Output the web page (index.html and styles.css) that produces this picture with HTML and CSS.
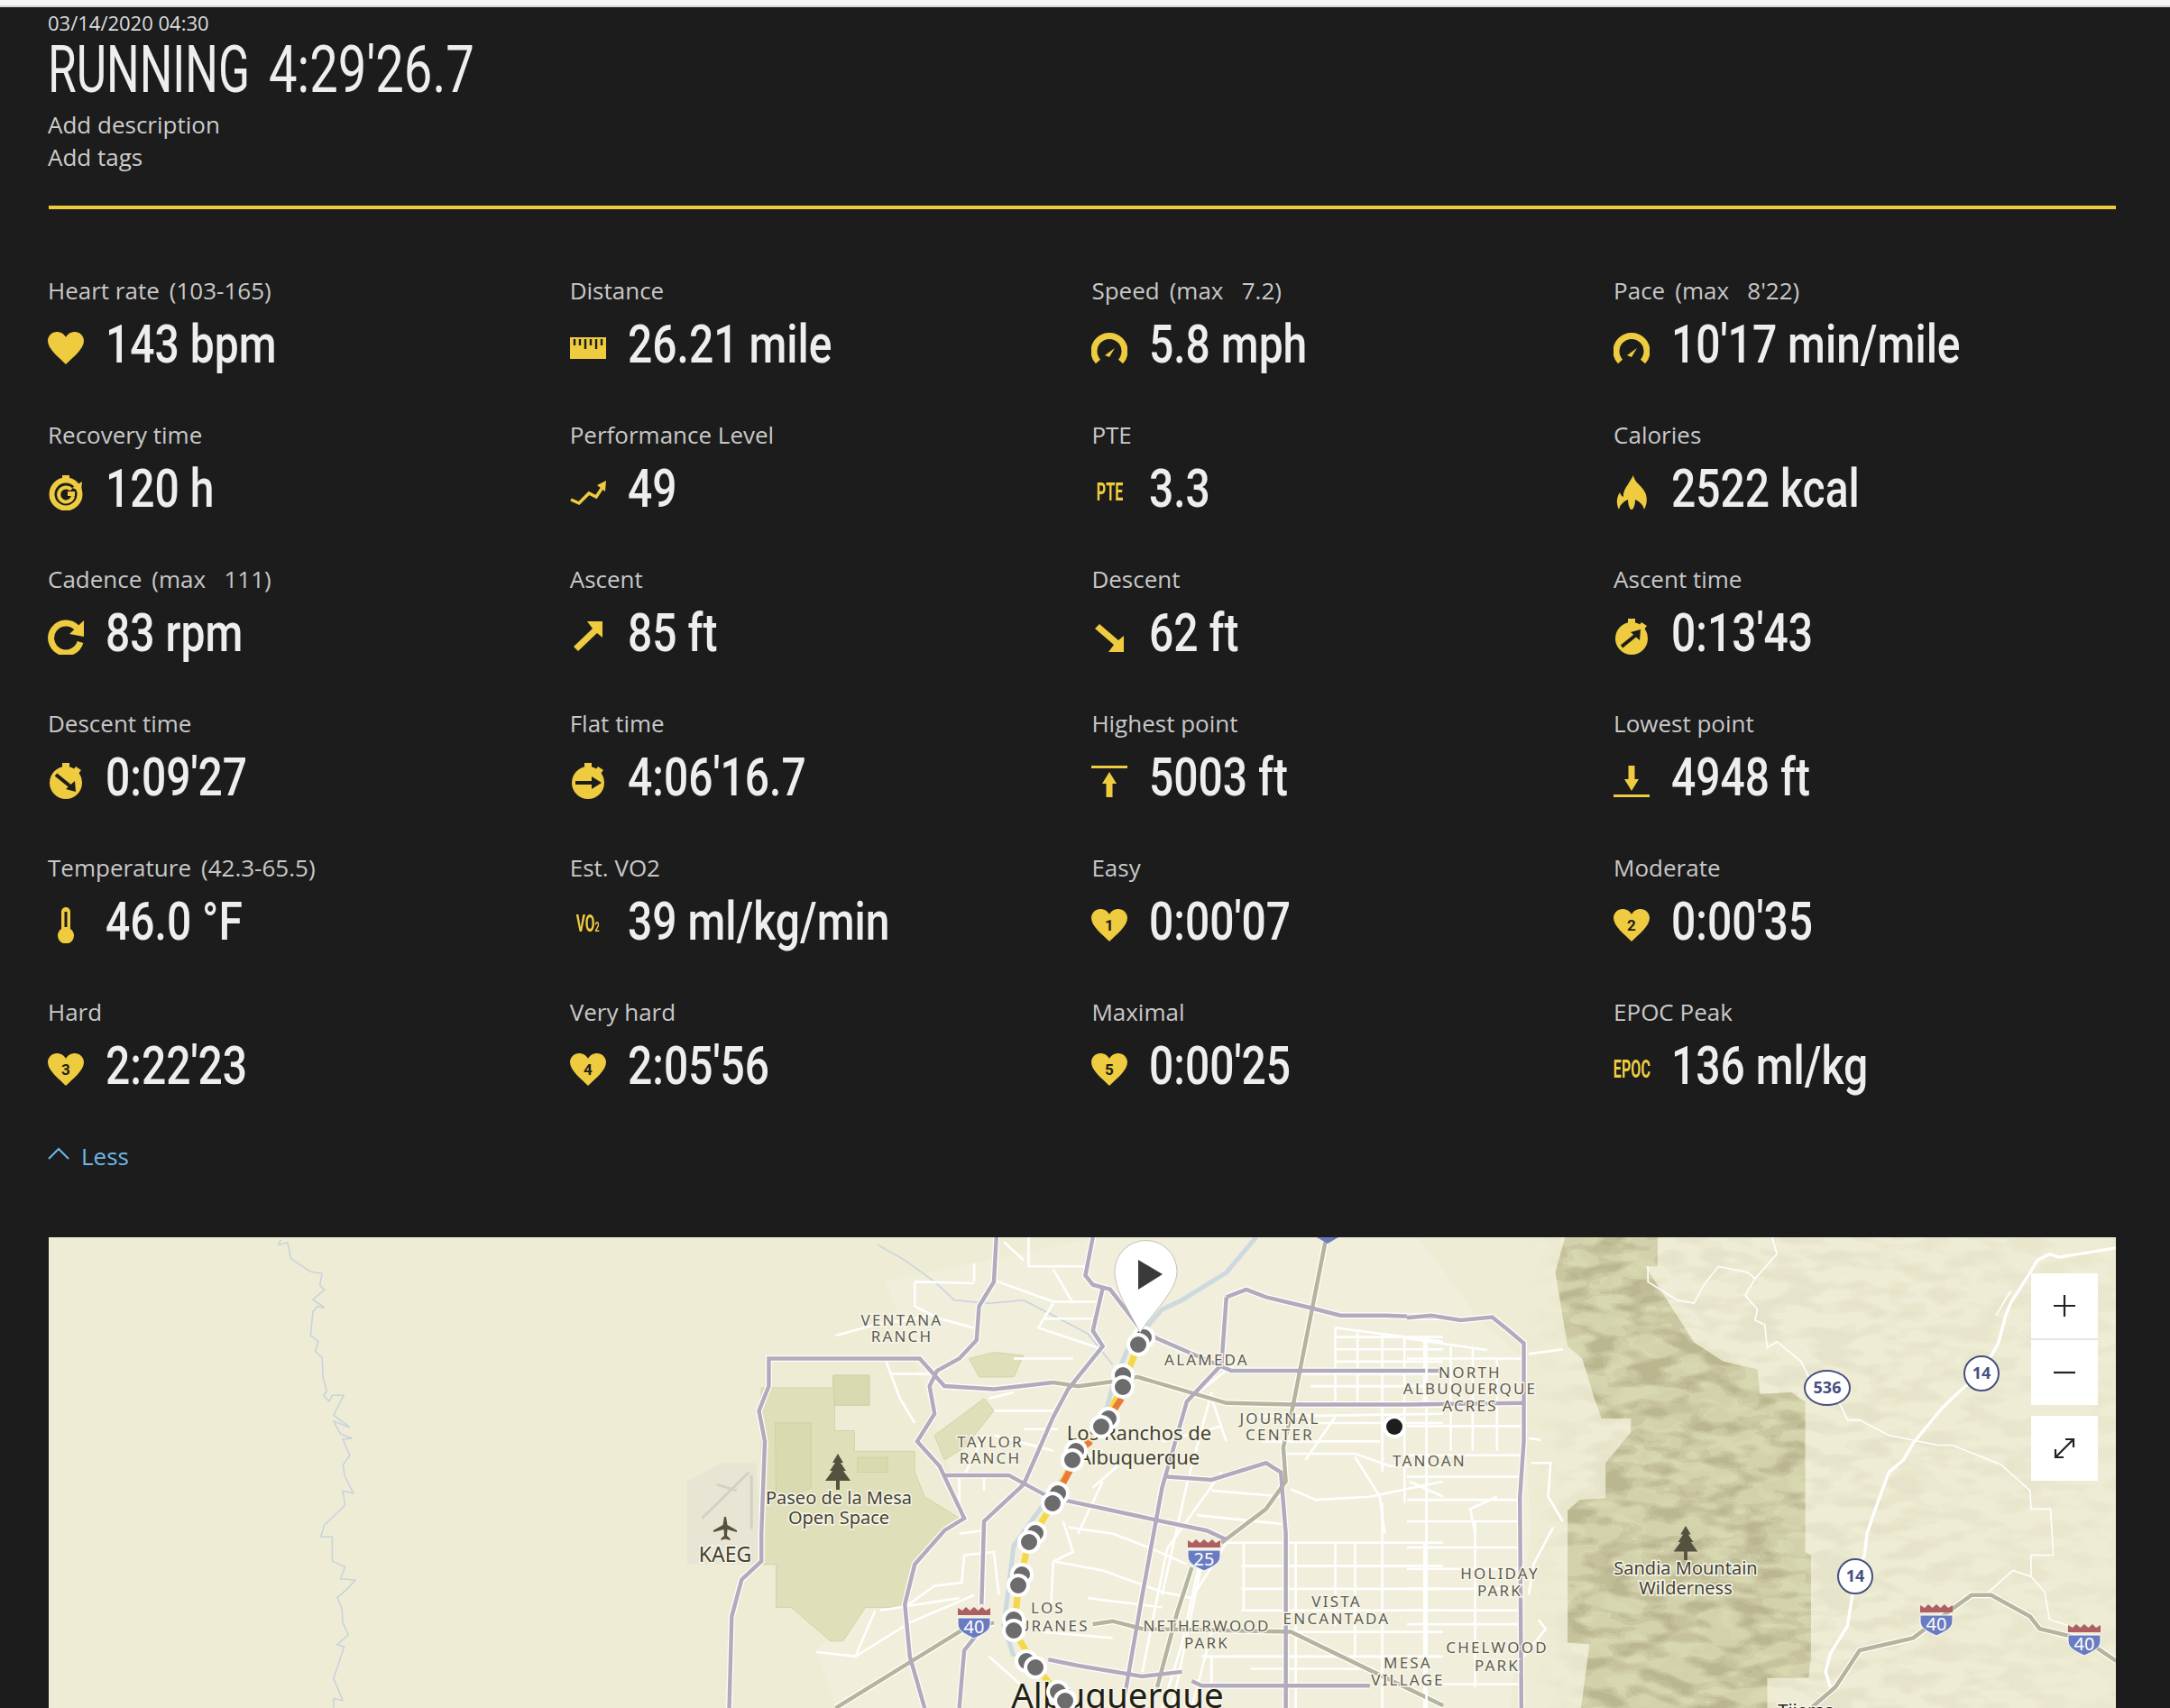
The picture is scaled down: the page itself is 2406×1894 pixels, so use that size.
FILE: index.html
```html
<!DOCTYPE html>
<html lang="en">
<head>
  <meta charset="UTF-8">
  <title>Running 4:29'26.7</title>
  <link rel="stylesheet" href="styles.css">
</head>
<body>
  <svg class="sprites" width="0" height="0">
    <symbol id="i-heart" viewBox="0 0 40 40"><path d="M20 38C12 30 0 21 0 12 0 6 5 2 10 2c4 0 8 2 10 6 2-4 6-6 10-6 5 0 10 4 10 10 0 9-12 18-20 26z"/></symbol>
    <symbol id="i-ruler" viewBox="0 0 40 40"><path d="M0 8h40v24H0z"/><path d="M5 10v7M11 10v7M17 10v11M23 10v7M29 10v11M35 10v7" stroke="#1c1c1c" stroke-width="2.4"/></symbol>
    <symbol id="i-gauge" viewBox="0 0 40 40"><path d="M7.500 35A17 17 0 1 1 32.500 35" fill="none" stroke="#eecb3f" stroke-width="7"/><path d="M15 28l11-8-6 10z"/></symbol>
    <symbol id="i-recovery" viewBox="0 0 40 40"><path d="M16 1h8v4h-8z"/><circle cx="20" cy="22" r="15.500" fill="none" stroke="#eecb3f" stroke-width="6"/><path d="M26 17a8 8 0 1 0 2 7" fill="none" stroke="#eecb3f" stroke-width="4"/><path d="M38 8l-1 11-10-4zM22 19h8v5h-8z"/></symbol>
    <symbol id="i-cadence" viewBox="0 0 40 40"><path d="M32 10A16.500 16.500 0 1 0 36 26" fill="none" stroke="#eecb3f" stroke-width="7"/><path d="M40 2v18l-16-3z"/></symbol>
    <symbol id="i-perf" viewBox="0 0 40 40"><path d="M1 28l9 4 11-11 8 4 8-12" fill="none" stroke="#eecb3f" stroke-width="3.500"/><path d="M40 7l-1 12-9-7z"/></symbol>
    <symbol id="i-flame" viewBox="0 0 40 40"><path d="M22 1C23 9 31 12 35 20 38 27 37 33 34 39 32 32 28 30 24 28 24 33 23 36 21 39H19C17 36 16 33 16 28 12 30 8 32 6 39 3 33 3 26 7 20 8 23 9 24 11 25 10 17 17 11 22 1Z"/></symbol>
    <symbol id="i-up" viewBox="0 0 40 40"><path d="M36 3v18l-6-5-21 20-5-5 21-20-6-8z"/></symbol>
    <symbol id="i-down" viewBox="0 0 40 40"><path d="M36 37V19l-6 5L9 6 4 11l21 18-6 8z"/></symbol>
    <symbol id="i-watch-up" viewBox="0 0 40 40"><path d="M16 0h8v5h-8zM31 4l6 4-3 4-6-4z"/><circle cx="20" cy="22" r="18"/><path d="M9 31l16-13" stroke="#1c1c1c" stroke-width="4"/><path d="M30 12l-1 12-10-9z" fill="#1c1c1c"/></symbol>
    <symbol id="i-watch-down" viewBox="0 0 40 40"><path d="M16 0h8v5h-8zM31 4l6 4-3 4-6-4z"/><circle cx="20" cy="22" r="18"/><path d="M9 13l16 13" stroke="#1c1c1c" stroke-width="4"/><path d="M31 32l-1-12-10 9z" fill="#1c1c1c"/></symbol>
    <symbol id="i-watch-flat" viewBox="0 0 40 40"><path d="M16 0h8v5h-8zM31 4l6 4-3 4-6-4z"/><circle cx="20" cy="22" r="18"/><path d="M6 22h20" stroke="#1c1c1c" stroke-width="4"/><path d="M35 22l-11-7v14z" fill="#1c1c1c"/></symbol>
    <symbol id="i-temp" viewBox="0 0 40 40"><path d="M15 24V5a5 5 0 0 1 10 0v19a9 9 0 1 1-10 0z"/><path d="M20 5v17" stroke="#1c1c1c" stroke-width="3"/></symbol>
    <symbol id="i-high" viewBox="0 0 40 40"><path d="M0 3h40v3H0zM20 10l8 13h-4.500v15h-7V23H12z"/></symbol>
    <symbol id="i-low" viewBox="0 0 40 40"><path d="M0 35h40v3H0zM20 31l8-13h-4.500V3h-7v15H12z"/></symbol>
    <symbol id="p-tree" viewBox="0 0 30 40"><path d="M15 0l6 10h-3l6 9h-3l8 11H17v10h-4V30H1l8-11H6l6-9H9z"/></symbol>
    <symbol id="p-plane" viewBox="0 0 26 26"><path d="M12 0h2l1.500 9L26 15v2l-10.500-3-.5 7 3.500 3v2L13 24.500 8.500 26v-2l3.500-3-.5-7L0 17v-2l10.500-6z"/></symbol>
    <g id="shield">
      <path d="M-18-5H18V2C18 10 8 14 0 18-8 14-18 10-18 2Z" fill="#6a7cc0" stroke="#fff"/>
      <path d="M-18-8V-16L-13-13-9-17-4.500-13 0-17 4.500-13 9-17 13-13 18-16V-8Z" fill="#ad5f63"/>
    </g>
  </svg>

  <div class="topbar"></div>

  <header class="head">
    <div class="head-date">03/14/2020 04:30</div>
    <h1 class="head-title"><span class="title-sport">RUNNING</span><span class="title-time">4:29'26.7</span></h1>
    <div class="head-link">Add description</div>
    <div class="head-link">Add tags</div>
  </header>

  <main class="content">
    <div class="stats">
      <div class="stat">
        <div class="stat-label">Heart rate<span class="range">(103-165)</span></div>
        <div class="stat-value"><svg class="stat-icon"><use href="#i-heart"/></svg><span class="num">143 bpm</span></div>
      </div>
      <div class="stat">
        <div class="stat-label">Distance</div>
        <div class="stat-value"><svg class="stat-icon"><use href="#i-ruler"/></svg><span class="num">26.21 mile</span></div>
      </div>
      <div class="stat">
        <div class="stat-label">Speed<span class="range">(max&nbsp;&nbsp; 7.2)</span></div>
        <div class="stat-value"><svg class="stat-icon"><use href="#i-gauge"/></svg><span class="num">5.8 mph</span></div>
      </div>
      <div class="stat">
        <div class="stat-label">Pace<span class="range">(max&nbsp;&nbsp; 8'22)</span></div>
        <div class="stat-value"><svg class="stat-icon"><use href="#i-gauge"/></svg><span class="num">10'17 min/mile</span></div>
      </div>

      <div class="stat">
        <div class="stat-label">Recovery time</div>
        <div class="stat-value"><svg class="stat-icon"><use href="#i-recovery"/></svg><span class="num">120 h</span></div>
      </div>
      <div class="stat">
        <div class="stat-label">Performance Level</div>
        <div class="stat-value"><svg class="stat-icon"><use href="#i-perf"/></svg><span class="num">49</span></div>
      </div>
      <div class="stat">
        <div class="stat-label">PTE</div>
        <div class="stat-value"><span class="stat-icon icon-text"><span>PTE</span></span><span class="num">3.3</span></div>
      </div>
      <div class="stat">
        <div class="stat-label">Calories</div>
        <div class="stat-value"><svg class="stat-icon"><use href="#i-flame"/></svg><span class="num">2522 kcal</span></div>
      </div>

      <div class="stat">
        <div class="stat-label">Cadence<span class="range">(max&nbsp;&nbsp; 111)</span></div>
        <div class="stat-value"><svg class="stat-icon"><use href="#i-cadence"/></svg><span class="num">83 rpm</span></div>
      </div>
      <div class="stat">
        <div class="stat-label">Ascent</div>
        <div class="stat-value"><svg class="stat-icon"><use href="#i-up"/></svg><span class="num">85 ft</span></div>
      </div>
      <div class="stat">
        <div class="stat-label">Descent</div>
        <div class="stat-value"><svg class="stat-icon"><use href="#i-down"/></svg><span class="num">62 ft</span></div>
      </div>
      <div class="stat">
        <div class="stat-label">Ascent time</div>
        <div class="stat-value"><svg class="stat-icon"><use href="#i-watch-up"/></svg><span class="num">0:13'43</span></div>
      </div>

      <div class="stat">
        <div class="stat-label">Descent time</div>
        <div class="stat-value"><svg class="stat-icon"><use href="#i-watch-down"/></svg><span class="num">0:09'27</span></div>
      </div>
      <div class="stat">
        <div class="stat-label">Flat time</div>
        <div class="stat-value"><svg class="stat-icon"><use href="#i-watch-flat"/></svg><span class="num">4:06'16.7</span></div>
      </div>
      <div class="stat">
        <div class="stat-label">Highest point</div>
        <div class="stat-value"><svg class="stat-icon"><use href="#i-high"/></svg><span class="num">5003 ft</span></div>
      </div>
      <div class="stat">
        <div class="stat-label">Lowest point</div>
        <div class="stat-value"><svg class="stat-icon"><use href="#i-low"/></svg><span class="num">4948 ft</span></div>
      </div>

      <div class="stat">
        <div class="stat-label">Temperature<span class="range">(42.3-65.5)</span></div>
        <div class="stat-value"><svg class="stat-icon"><use href="#i-temp"/></svg><span class="num">46.0 °F</span></div>
      </div>
      <div class="stat">
        <div class="stat-label">Est. VO2</div>
        <div class="stat-value"><span class="stat-icon icon-text icon-vo"><span>VO<small>2</small></span></span><span class="num">39 ml/kg/min</span></div>
      </div>
      <div class="stat">
        <div class="stat-label">Easy</div>
        <div class="stat-value"><svg class="stat-icon" viewBox="0 0 40 40"><use href="#i-heart" width="40" height="40"/><text class="zone-num" x="20" y="26">1</text></svg><span class="num">0:00'07</span></div>
      </div>
      <div class="stat">
        <div class="stat-label">Moderate</div>
        <div class="stat-value"><svg class="stat-icon" viewBox="0 0 40 40"><use href="#i-heart" width="40" height="40"/><text class="zone-num" x="20" y="26">2</text></svg><span class="num">0:00'35</span></div>
      </div>

      <div class="stat">
        <div class="stat-label">Hard</div>
        <div class="stat-value"><svg class="stat-icon" viewBox="0 0 40 40"><use href="#i-heart" width="40" height="40"/><text class="zone-num" x="20" y="26">3</text></svg><span class="num">2:22'23</span></div>
      </div>
      <div class="stat">
        <div class="stat-label">Very hard</div>
        <div class="stat-value"><svg class="stat-icon" viewBox="0 0 40 40"><use href="#i-heart" width="40" height="40"/><text class="zone-num" x="20" y="26">4</text></svg><span class="num">2:05'56</span></div>
      </div>
      <div class="stat">
        <div class="stat-label">Maximal</div>
        <div class="stat-value"><svg class="stat-icon" viewBox="0 0 40 40"><use href="#i-heart" width="40" height="40"/><text class="zone-num" x="20" y="26">5</text></svg><span class="num">0:00'25</span></div>
      </div>
      <div class="stat">
        <div class="stat-label">EPOC Peak</div>
        <div class="stat-value"><span class="stat-icon icon-text"><span>EPOC</span></span><span class="num">136 ml/kg</span></div>
      </div>
    </div>

    <a class="less" href="#">
      <svg class="less-chevron" viewBox="0 0 24 14"><path d="M1 13L12 2l11 11"/></svg>
      Less
    </a>

    <div class="map">
      <svg class="map-svg" viewBox="0 0 2292 522" width="2292" height="522">
        <defs>
          <filter id="hills" x="0" y="0" width="100%" height="100%" color-interpolation-filters="sRGB">
            <feTurbulence type="fractalNoise" baseFrequency=".024 .06" numOctaves="2" seed="7"/>
            <feColorMatrix values="0 0 0 0 .60  0 0 0 0 .57  0 0 0 0 .42  3.4 0 0 0 -1.35"/>
            <feComponentTransfer><feFuncA type="discrete" tableValues="0 .35 .7 1"/></feComponentTransfer>
          </filter>
          <filter id="hills-light" x="0" y="0" width="100%" height="100%" color-interpolation-filters="sRGB">
            <feTurbulence type="fractalNoise" baseFrequency=".03 .05" numOctaves="2" seed="21"/>
            <feColorMatrix values="0 0 0 0 .92  0 0 0 0 .91  0 0 0 0 .76  3.4 0 0 0 -1.35"/>
            <feComponentTransfer><feFuncA type="discrete" tableValues="0 .4 .8"/></feComponentTransfer>
          </filter>
          <linearGradient id="hills-fade">
            <stop offset="0" stop-color="#000"/>
            <stop offset=".12" stop-color="#fff"/>
            <stop offset=".55" stop-color="#fff"/>
            <stop offset="1" stop-color="#777"/>
          </linearGradient>
          <mask id="hills-mask" maskUnits="userSpaceOnUse" x="1640" y="0" width="652" height="522">
            <rect x="1640" width="652" height="522" fill="url(#hills-fade)"/>
          </mask>
          <clipPath id="wild-clip">
            <polygon transform="translate(1506 -12) scale(.5397 .3406)" points="325,35 515,35 515,130 490,130 590,378 650,440 720,465 725,545 790,540 818,570 818,1060 830,1070 830,1400 825,1470 740,1470 740,1600 355,1600 375,1360 330,1355 330,925 355,890 408,885 408,770 460,670 460,625 400,625 385,560 360,430 330,390 305,150"/>
          </clipPath>
          <g id="a-arts">
            <path d="M125 1568L130 1270 150 1150 190 1090 190 1000 197 700 185 600 205 520V430H510L560 520 660 530 780 508"/>
            <path d="M860 35L845 160 860 190 895 205 950 320 990 365 1140 470H1280L1568 470"/>
            <path d="M1265 580H1568"/>
            <path d="M665 35L660 180 630 260 625 370 590 430 545 470 530 520 540 610 505 700 550 780 600 950 560 990 500 1100 480 1230 490 1400 520 1568"/>
            <path d="M880 200L860 340 880 390 810 530 780 620 720 840 640 960 635 1230"/>
            <path d="M560 810H690L770 880 1000 960 1090 990 1130 1020"/>
            <path d="M1130 230L1170 205 1210 230 1300 265 1360 290H1450L1540 295 1568 295"/>
            <path d="M1130 230L1120 450 1050 570 1000 850 960 1200 920 1568"/>
            <path d="M1010 815L1100 825 1210 770 1240 800 1250 1000V1568"/>
            <path d="M1060 1480L1080 1495H1420"/>
            <path d="M770 1410L830 1430 960 1465 1040 1450"/>
            <path d="M590 1568L600 1380 640 1300"/>
          </g>
          <g id="a-tan">
            <path d="M1330 50L1265 580 1245 720 1250 830 1210 920 1120 1030"/>
            <path d="M1060 1110L1030 1260 990 1500"/>
            <path d="M340 1568L600 1310 660 1290"/>
            <path d="M860 1295L900 1285 960 1310 1260 1320 1568 1560"/>
            <path d="M780 508L830 520 900 505 950 490 1130 575 1265 580"/>
          </g>
          <g id="b-arts">
            <path d="M0 297L50 290 110 305 175 295 210 340 240 380V700L232 880 235 1568"/>
            <path d="M0 580L240 575"/>
          </g>
          <g id="b-tan">
            <path d="M830 1568L880 1500 930 1380 1040 1340 1090 1280 1160 1200H1200L1280 1270 1300 1310 1392 1345 1457 1415"/>
          </g>
        </defs>

        <rect class="map-ground" width="2292" height="522"/>

        <!-- outer hills -->
        <g mask="url(#hills-mask)">
          <rect class="hills-faint" x="1640" width="652" height="522" filter="url(#hills)"/>
        </g>

        <g transform="translate(686 -12) scale(.5485 .3406)">
          <path class="urban" d="M440 180L860 40H1520L1640 300 1730 430 1745 1000 1700 1600H350L300 1380 500 1100 600 950 500 430Z"/>
          <path class="park" d="M190 525H335V485H408V582H338V665H378V732H500V800L520 880 590 950 540 1020 500 1100 480 1200 470 1240H400L355 1350H330L250 1240H220V1100H190Z"/>
          <path class="park-dark" d="M218 640H290V850L220 900ZM384 752H445V800H384ZM335 485H408V582H338Z"/>
          <path class="park" d="M610 430L660 410 720 420 700 490H630ZM540 680L590 620 640 560 660 600 600 720 560 760Z"/>
          <path class="airport" d="M40 830L110 770H180L190 1100H40Z"/>
          <path class="runway" d="M70 950L165 800M100 840L140 860M170 810V985"/>
          <path class="water" d="M1190 35L1130 150 1040 240 1000 270 930 400 900 520 880 640 800 820 740 950 700 1040 680 1300 700 1400"/>
          <path class="stream" d="M425 60L480 110 540 180 580 240 650 250 720 240 780 290 850 350 900 450"/>
          <path class="white" d="M1350 330L1568 375M1350 360H1568M1350 400H1568M1350 440H1568M1350 330V580M1395 345V580M1445 350V800M1490 355V900M1530 360V580M1280 480H1568M1300 520H1568M1160 620L1568 610M1290 640H1568M1200 700H1440"/>
          <path class="white" d="M1130 1030H1568M1160 1105H1568M1160 1180H1568M1160 1250H1568M1060 1320H1568M1080 1400H1568M1165 1030V1250M1270 1030V1568M1350 1030V1300M1445 900V1568M1530 1030V1568M1100 1400V1568M1180 1440H1420M1130 1030L1060 1210M1390 1030V1400"/>
          <path class="white" d="M810 980L900 1000 980 1050 1050 1100M780 1090L880 1120 1000 1190 1060 1210M860 850L910 780M1250 740H1390L1460 780H1568M1260 855L1310 890 1420 880 1568 830M1390 750L1440 880 1450 1000M1500 830L1568 880M1000 700L1120 650M1130 700L1100 560M1160 430L1050 570M1350 620L1290 760M1100 860L1250 880M1070 940L1250 970"/>
          <path class="white" d="M500 180L620 185M500 180V260L550 300 620 330M340 355L420 320 500 300 530 290M660 175L780 245H880M780 250L750 330 880 400M730 35V130H850M680 50L720 110M620 120V180M440 430L470 560 500 640M450 480H540M650 560L700 540M660 600H780M720 660H790M660 680L780 730M590 810V930M640 810V860M590 1000L640 990M600 1070L660 1060 670 1200M600 1070L595 1160 540 1170 480 1240M430 1250L590 1210M420 1250L380 1400 300 1385M380 1400L490 1290 620 1200M800 960L820 1060 780 1090 775 1250M800 780L880 730M880 830L830 1000M1020 1568L1080 1100M1120 800L1010 1050 960 1450M1100 540L1050 840 1000 1200M1080 1060L1040 1360 1000 1568M650 1400L720 1500M1100 1320L1060 1568M760 300L860 300M700 430L820 430M780 140L820 250M640 680L600 810M850 1210L1000 1240M760 1320L900 1340"/>
          <use href="#a-tan" class="casing"/>
          <use href="#a-arts" class="casing"/>
          <use href="#a-tan" class="road-tan"/>
          <use href="#a-arts" class="road-art"/>
          <path class="route" d="M952 385L920 520 880 650 820 760 780 900 730 1030 710 1170 700 1315 745 1435 800 1540"/>
          <path class="route-hot" d="M918 560L885 640M856 700L835 725M815 790L800 835"/>
        </g>

        <g transform="translate(1506 -12) scale(.5397 .3406)">
          <path class="white" d="M0 365L165 402M40 365V1568M90 385V730M135 400V730M185 430V730M0 430H240M0 650H235M0 745H235M0 815H230M0 890H230M0 960H230M0 1045H235M0 1115H235M0 1180H235M0 1250H235M0 1295H240M0 1490H230M40 960V1568M140 960V1500M185 880L130 920 140 1000"/>
          <path class="white" d="M250 415L320 400M250 690L275 695M255 770L295 770 290 880 320 960M300 980L260 1100 250 1200M270 1280L285 1310 240 1400"/>
          <use href="#b-tan" class="casing"/>
          <use href="#b-arts" class="casing"/>
          <use href="#b-tan" class="road-tan"/>
          <use href="#b-arts" class="road-art"/>
        </g>

        <g clip-path="url(#wild-clip)">
          <rect class="wild" x="1660" width="400" height="522"/>
          <rect class="hills-strong" x="1660" width="400" height="522" filter="url(#hills)"/>
          <rect class="hills-light" x="1660" width="400" height="522" filter="url(#hills-light)"/>
        </g>

        <g transform="translate(1506 -12) scale(.5397 .3406)">
          <path class="trail" d="M750 35L760 90 715 170 695 225 720 270 715 305 735 320 740 395 760 375 810 440 825 490 890 580 905 630H930L990 680 1090 712H1120L1220 775 1280 860 1282 920H1322L1328 1070H1282V1140L1245 1120 1195 1190M1282 1140L1310 1190 1320 1280 1360 1300"/>
          <path class="trail" d="M495 130V180L555 240 590 250 610 190 640 130 700 150 715 170M1240 210L1210 290"/>
          <path class="highway" d="M1457 70L1340 100 1320 90 1295 110 1280 150 1240 250 1230 290 1215 380 1180 478 1140 530 1100 590 1040 705 1020 760 990 800 960 930 945 1000 940 1070 921 1140 905 1300 870 1390 860 1450 870 1500"/>
        </g>

        <g transform="translate(-54 -172) scale(.5102 .4424)">
          <path class="stream" d="M610 395L605 408 625 402 632 442 675 475 700 480 695 510 705 520 680 545 705 565 690 562 680 575 675 635 692 650 685 675 700 690 702 740 710 775 703 785 715 800 722 785H747L725 835 760 865 725 850 740 882 765 893 745 895 760 935 745 960 750 990 768 1030 745 1025 750 1060 705 1110 697 1140 722 1140V1200L750 1215 740 1245 772 1248 755 1270 733 1292 743 1320 745 1355 757 1385 733 1410 748 1415 725 1495 745 1550 725 1545V1568"/>
        </g>

        <use href="#p-tree" class="poi" x="860" y="240" width="30" height="40"/>
        <use href="#p-tree" class="poi" x="1800" y="320" width="30" height="38"/>
        <use href="#p-plane" class="poi" x="737" y="310" width="26" height="26"/>

        <g class="map-label">
          <text x="946" y="98">VENTANA</text><text x="946" y="116">RANCH</text>
          <text x="1284" y="142">ALAMEDA</text>
          <text x="1576" y="156">NORTH</text><text x="1576" y="174">ALBUQUERQUE</text><text x="1576" y="193">ACRES</text>
          <text x="1365" y="207">JOURNAL</text><text x="1365" y="225">CENTER</text>
          <text x="1044" y="233">TAYLOR</text><text x="1044" y="251">RANCH</text>
          <text x="1531" y="254">TANOAN</text>
          <text x="1609" y="379">HOLIDAY</text><text x="1609" y="398">PARK</text>
          <text x="1108" y="417">LOS</text><text x="1107" y="437">DURANES</text>
          <text x="1284" y="437">NETHERWOOD</text><text x="1284" y="456">PARK</text>
          <text x="1428" y="410">VISTA</text><text x="1428" y="429">ENCANTADA</text>
          <text x="1507" y="478">MESA</text><text x="1507" y="497">VILLAGE</text>
          <text x="1606" y="461">CHELWOOD</text><text x="1606" y="481">PARK</text>
        </g>
        <g class="map-place">
          <text x="876" y="296">Paseo de la Mesa</text><text x="876" y="318">Open Space</text>
          <text x="1815" y="374">Sandia Mountain</text><text x="1815" y="396">Wilderness</text>
          <text class="map-suburb" x="1209" y="225">Los Ranchos de</text><text class="map-suburb" x="1209" y="252">Albuquerque</text>
          <text class="map-airport" x="750" y="360">KAEG</text>
          <text class="map-city" x="1185" y="522">Albuquerque</text>
          <text class="map-town" x="1948" y="532">Tijeras</text>
        </g>

        <g class="shields">
          <path d="M1406 0h24l-12 7z" fill="#6a7cc0"/>
          <g transform="translate(1281 352)"><use href="#shield"/><text y="12">25</text></g>
          <g transform="translate(1026 427)"><use href="#shield"/><text y="12">40</text></g>
          <g transform="translate(2093 424)"><use href="#shield"/><text y="12">40</text></g>
          <g transform="translate(2257 446)"><use href="#shield"/><text y="12">40</text></g>
        </g>
        <g class="road-signs">
          <ellipse cx="1972" cy="167" rx="25" ry="19"/><text x="1972" y="173">536</text>
          <ellipse cx="2143" cy="151" rx="19" ry="19"/><text x="2143" y="157">14</text>
          <ellipse cx="2003" cy="376" rx="19" ry="19"/><text x="2003" y="382">14</text>
        </g>

        <circle class="poi-ring" cx="1492" cy="210" r="13"/><circle class="poi-dot" cx="1492" cy="210" r="9"/>

        <g class="markers">
          <circle cx="1214" cy="111"/><circle cx="1208" cy="119"/>
          <circle cx="1191" cy="153"/><circle cx="1191" cy="166"/>
          <circle cx="1175" cy="201"/><circle cx="1167" cy="210"/>
          <circle cx="1139" cy="237"/><circle cx="1135" cy="247"/>
          <circle cx="1119" cy="284"/><circle cx="1113" cy="295"/>
          <circle cx="1094" cy="328"/><circle cx="1087" cy="338"/>
          <circle cx="1079" cy="374"/><circle cx="1075" cy="386"/>
          <circle cx="1070" cy="424"/><circle cx="1070" cy="436"/>
          <circle cx="1084" cy="470"/><circle cx="1094" cy="477"/>
          <circle cx="1119" cy="504"/><circle cx="1127" cy="514"/>
        </g>

        <path class="pin" d="M1210 106C1200 85 1182 60 1182 38A34.500 34.500 0 0 1 1251 38C1251 60 1222 85 1210 106Z"/>
        <path class="pin-play" d="M1208 25L1235 41 1208 58Z"/>
      </svg>

      <div class="map-controls">
        <div class="map-zoom">
          <button class="map-btn map-btn-split"><svg viewBox="0 0 26 26"><path d="M13 1v24M1 13h24"/></svg></button>
          <button class="map-btn"><svg viewBox="0 0 26 26"><path d="M1 13h24"/></svg></button>
        </div>
        <button class="map-btn"><svg viewBox="0 0 26 26"><path d="M3 23L23 3M14 3h9v9M3 14v9h9"/></svg></button>
      </div>
    </div>
  </main>
</body>
</html>
```

FILE: styles.css
```css
html, body { margin: 0; padding: 0; }
body { width: 2406px; height: 1894px; overflow: hidden; background: #1c1c1c; color: #eee; font-family: "Open Sans", sans-serif; }
.sprites { position: absolute; }

.topbar { height: 6px; background: #f6f6f6; border-bottom: 2px solid #d5dade; }

.head { padding-left: 53px; }
.head-date { height: 28px; padding-top: 3px; box-sizing: border-box; font-size: 22px; line-height: 28px; color: #ddd; }
.head-title { display: flex; margin: 0; height: 68px; font-family: "Roboto", sans-serif; font-size: 73px; line-height: 82px; font-weight: 400; color: #eee; white-space: nowrap; }
.title-sport { flex: none; width: 245px; transform: scaleX(.704); transform-origin: left center; }
.title-time { flex: none; transform: scaleX(.77); transform-origin: left center; }
.head-link { height: 36px; font-size: 26px; line-height: 36px; color: #ccc; }
.head-title + .head-link { margin-top: 16px; }

.content { margin: 36px 60px 0 54px; border-top: 4px solid #eecb3f; }

.stats { display: grid; grid-template-columns: repeat(4, 578.7px); grid-auto-rows: 160px; margin-top: 72px; margin-left: -1px; }
.stat-label { height: 36px; font-size: 26px; line-height: 36px; color: #c8c8c8; white-space: nowrap; }
.range { margin-left: 11px; }
.stat-value { display: flex; align-items: center; gap: 24px; height: 60px; margin-top: 12px; font-family: "Roboto", sans-serif; font-size: 60px; line-height: 60px; color: #eee; white-space: nowrap; }
.num { transform: scaleX(.8); transform-origin: left center; font-weight: 500; }
.stat-icon { flex: none; width: 40px; height: 40px; margin-top: 8px; fill: #eecb3f; }
.icon-text { display: flex; justify-content: center; align-items: center; font-size: 27px; line-height: 40px; font-weight: 700; color: #eecb3f; }
.icon-text span { transform: scaleX(.6); }
.icon-vo { font-size: 26px; }
.icon-vo small { font-size: 15px; }
.zone-num { font-family: "Roboto", sans-serif; font-size: 17px; font-weight: 700; fill: #1c1c1c; text-anchor: middle; }

.less { display: flex; align-items: center; gap: 13px; height: 36px; margin-left: -1px; font-size: 26px; line-height: 36px; color: #6cb8e8; text-decoration: none; }
.less-chevron { width: 24px; height: 14px; margin-top: -6px; fill: none; stroke: #6cb8e8; stroke-width: 2; }

/* map */
.map { position: relative; height: 522px; margin-top: 72px; overflow: hidden; }
.map-svg { display: block; }
.map-svg path, .map-svg use { vector-effect: non-scaling-stroke; }
.map-ground { fill: #eeecd4; }
.hills-faint { opacity: .1; }
.hills-strong { opacity: .42; }
.hills-light { opacity: .32; }
.wild { fill: #d2d1ab; }
.urban { fill: #f1eedb; }
.park { fill: #dfdfb9; stroke: #d2d3a8; stroke-width: 1; }
.park-dark { fill: #d9dab0; stroke: #cfd0a4; stroke-width: 1; }
.airport { fill: #e8e5d4; }
.runway { fill: none; stroke: #d3d1c3; stroke-width: 3; }
.water { fill: none; stroke: #ccd9de; stroke-width: 5; }
.stream { fill: none; stroke: #c7d2df; stroke-width: 1.5; }
.white { fill: none; stroke: #fff; stroke-width: 2.6; }
.trail { fill: none; stroke: #fff; stroke-width: 1.6; }
.highway { fill: none; stroke: #fff; stroke-width: 3.4; }
.casing { fill: none; stroke: #fff; stroke-width: 7; }
.road-art { fill: none; stroke: #b3abbb; stroke-width: 4.5; }
.road-tan { fill: none; stroke: #b6b49c; stroke-width: 4.5; }
.route { fill: none; stroke: #f5d84a; stroke-width: 7; }
.route-hot { fill: none; stroke: #ea7a3a; stroke-width: 7; }
.poi { fill: #54523f; }
.poi-ring { fill: #fff; }
.poi-dot { fill: #1d1d1d; }
.markers circle { r: 11px; fill: #6c6c6c; stroke: #fff; stroke-width: 4; }
.pin { fill: #fff; stroke: #8c8c80; stroke-width: .5; }
.pin-play { fill: #3a3a3a; }

.map-label text { font-family: "Noto Sans", sans-serif; font-size: 17px; letter-spacing: 2.2px; fill: #5e5c4e; stroke: #f7f5ea; stroke-width: 3px; paint-order: stroke; text-anchor: middle; }
.map-place text { font-family: "Noto Sans", sans-serif; font-size: 20px; fill: #44432f; stroke: #f7f5ea; stroke-width: 3px; paint-order: stroke; text-anchor: middle; }
.map-place .map-suburb { font-size: 22px; }
.map-place .map-airport { font-size: 23px; }
.map-place .map-city { font-size: 38.5px; fill: #1f1f15; }
.map-place .map-town { font-size: 20px; fill: #1f1f15; }
.shields text { font-family: "Noto Sans", sans-serif; font-size: 20px; fill: #fff; text-anchor: middle; }
.road-signs ellipse { fill: #fff; stroke: #47507f; stroke-width: 2; }
.road-signs text { font-family: "Noto Sans", sans-serif; font-size: 18px; font-weight: 700; fill: #47507f; text-anchor: middle; }

.map-controls { position: absolute; top: 40px; right: 20px; display: flex; flex-direction: column; gap: 12px; }
.map-zoom { display: flex; flex-direction: column; }
.map-btn { display: flex; align-items: center; justify-content: center; width: 74px; height: 72px; padding: 0; background: #fff; border: none; }
.map-btn-split { height: 74px; border-bottom: 2px solid #e6e6e6; }
.map-btn svg { width: 26px; height: 26px; fill: none; stroke: #222; stroke-width: 2.2; }
```
